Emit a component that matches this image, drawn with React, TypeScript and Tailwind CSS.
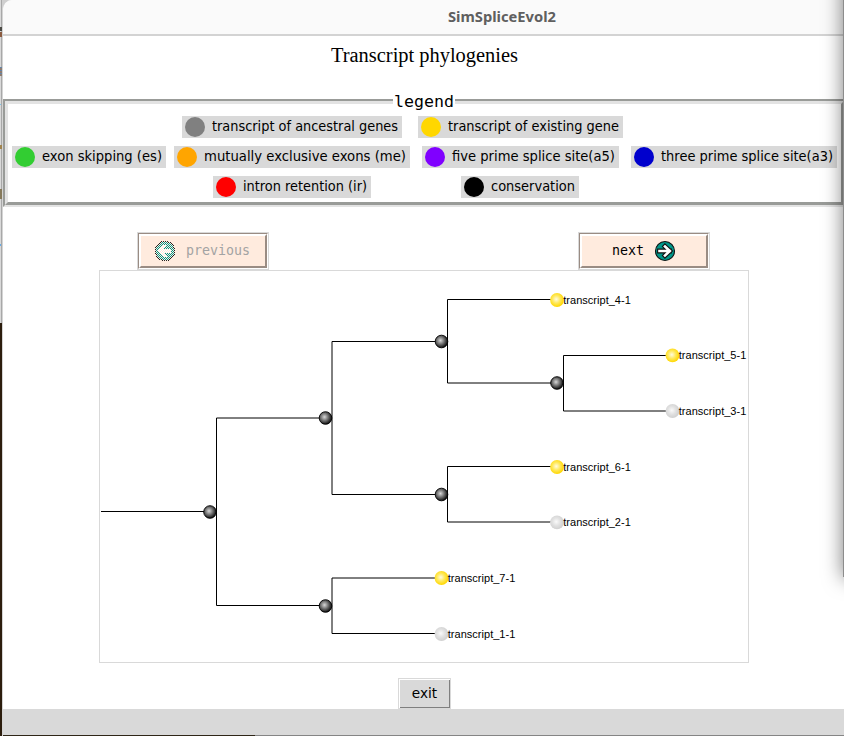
import { ReactNode } from "react";

type Item = { color: string; label: string; width: string; textWidth: number };

function LegendItem({ color, label, width, textWidth }: Item) {
  return (
    <div className={`flex h-[22px] items-center bg-[#d9d9d9] pl-[3px] ${width}`}>
      <span className={`size-5 shrink-0 rounded-full ${color}`} />
      <svg className="ml-[7px] h-[22px] shrink-0 overflow-visible" width={textWidth} height="22">
        <text
          x="0"
          y="15"
          textLength={textWidth}
          lengthAdjust="spacingAndGlyphs"
          className="fill-black font-['DejaVu_Sans',sans-serif] text-[13.6px]"
        >
          {label}
        </text>
      </svg>
    </div>
  );
}

function NextArrow() {
  const arrow = "M5.5 11H15.5M11 6.5L15.8 11L11 15.5";
  return (
    <svg width="22" height="22" viewBox="0 0 22 22" className="shrink-0">
      <circle cx="11" cy="11" r="9.5" fill="#009688" stroke="#111" strokeWidth="1.1" />
      <path d={arrow} fill="none" stroke="#111" strokeWidth="4.8" strokeLinecap="square" />
      <path d={arrow} fill="none" stroke="#fff" strokeWidth="2.6" strokeLinecap="square" />
    </svg>
  );
}

// The disabled icon keeps every other pixel of a left-pointing arrow in a disc.
const pixels = { teal: "", dark: "", white: "" };
for (let y = 0; y < 22; y++) {
  for (let x = 0; x < 22; x++) {
    if ((x + y) % 2) continue;
    const r = Math.hypot(x - 10.5, y - 10.5);
    if (r > 10.2) continue;
    const dy = Math.abs(y - 10.5);
    const inArrow = (dy < 2 && x > 5 && x < 17) || (dy < 6 && Math.abs(x - 5 - dy) < 2.2);
    const kind = r > 9 ? "dark" : inArrow ? "white" : "teal";
    pixels[kind] += `M${x} ${y}h1v1h-1z`;
  }
}

function PreviousArrow() {
  return (
    <svg width="22" height="22" viewBox="0 0 22 22" className="shrink-0" shapeRendering="crispEdges">
      <path d={pixels.teal} fill="#009688" />
      <path d={pixels.dark} fill="#222" />
      <path d={pixels.white} fill="#fff" />
    </svg>
  );
}

function NavButton({ inset, children }: { inset: string; children: ReactNode }) {
  return (
    <button className="h-[38px] w-[132px] border border-[#d9d9d9] bg-white">
      <span className="block h-full border-t border-r border-b border-l border-t-[#9a8c83] border-r-white border-b-white border-l-[#9a8c83]">
        <span
          className={`flex h-full items-center border-t-2 border-r-2 border-b-2 border-l-2 border-t-white border-r-[#9a8c83] border-b-[#9a8c83] border-l-white bg-[#ffebde] font-['DejaVu_Sans_Mono',monospace] text-[13.3px] ${inset}`}
        >
          {children}
        </span>
      </span>
    </button>
  );
}

const branches = [
  "M101 511.5H210", "M216.5 605.5V418H326", "M216.5 605.5H326",
  "M332 494.5V341.5H441", "M332 494.5H441", "M332 633.5V578H441", "M332 633.5H441",
  "M447.5 383V299.5H557", "M447.5 383H557", "M447.5 522V466.5H557", "M447.5 522H557",
  "M563.5 411V355.5H673", "M563.5 411H673",
];
const inner = [[210, 512], [325.5, 418], [325.5, 606], [441.5, 341.5], [441.5, 494.5], [557, 383]];
const leaves = [
  { x: 557, y: 300, n: "4", on: true },
  { x: 672.5, y: 355.4, n: "5", on: true },
  { x: 672.5, y: 411, n: "3", on: false },
  { x: 557, y: 467, n: "6", on: true },
  { x: 557, y: 522.4, n: "2", on: false },
  { x: 441.5, y: 578, n: "7", on: true },
  { x: 441.5, y: 634, n: "1", on: false },
];

function Tree() {
  return (
    <svg width="648" height="391" viewBox="100 271 648 391" className="block">
      <defs>
        <radialGradient id="black" cx=".42" cy=".42" r=".6">
          <stop offset="0" stopColor="#d8d8d8" />
          <stop offset=".5" stopColor="#707070" />
          <stop offset="1" stopColor="#080808" />
        </radialGradient>
        <radialGradient id="gold" cx=".45" cy=".45" r=".55">
          <stop offset="0" stopColor="#fffbe0" />
          <stop offset=".5" stopColor="#ffe95e" />
          <stop offset="1" stopColor="#ffd700" />
        </radialGradient>
        <radialGradient id="silver" cx=".45" cy=".45" r=".55">
          <stop offset="0" stopColor="#fafafa" />
          <stop offset=".5" stopColor="#e2e2e2" />
          <stop offset="1" stopColor="#d0d0d0" />
        </radialGradient>
      </defs>
      {branches.map((d) => (
        <path key={d} d={d} fill="none" stroke="#000" strokeWidth="1" />
      ))}
      {inner.map(([x, y]) => (
        <circle key={`${x}-${y}`} cx={x} cy={y} r="6.3" fill="url(#black)" stroke="#000" strokeWidth=".9" />
      ))}
      {leaves.map(({ x, y, n, on }) => (
        <g key={n}>
          <circle cx={x} cy={y} r="6.9" fill={on ? "url(#gold)" : "url(#silver)"} />
          <text
            x={x + 6.3}
            y={Math.round(y) + 4}
            textLength="67.5"
            className="fill-black font-['Liberation_Sans',Arial,sans-serif] text-[11px]"
          >
            {`transcript_${n}-1`}
          </text>
        </g>
      ))}
    </svg>
  );
}

export default function App() {
  return (
    <div className="relative flex h-[736px] w-[844px] overflow-hidden bg-[#cfcfcf]">
      <div className="flex w-[2px] shrink-0 flex-col">
        <div className="flex h-[323px] flex-col bg-[linear-gradient(to_right,#d9d9d9_50%,#a8a8a8_50%)]">
          <div className="mt-[27px] h-1 bg-[#4b4a45]" />
          <div className="mt-px h-[5px] bg-[#8b5b40]" />
          <div className="mt-[30px] h-[9px] bg-[repeating-linear-gradient(to_bottom,#6484a8_0_1px,#8d7c70_1px_3px)]" />
          <div className="mt-7 h-px w-px bg-[#7cc4ea]" />
          <div className="mt-10 h-1 bg-[#a08450]" />
          <div className="mt-10 h-[10px] bg-[#85795b]" />
          <div className="mt-[45px] h-[2px] w-px bg-[#68aee8]" />
        </div>
        <div className="flex-1 bg-[#2c1d0d]" />
      </div>
      <div className="flex min-w-0 flex-1 flex-col overflow-hidden rounded-tl-[10px] border-l border-[#d4d4d4] bg-white">
        <header className="h-9 shrink-0 border-b-2 border-[#d3d3d3] bg-[#fafafa]">
          <svg width="841" height="34">
            <text
              x="445"
              y="22"
              textLength="108"
              lengthAdjust="spacingAndGlyphs"
              className="fill-[#5f5f5f] font-['Noto_Sans','Open_Sans',sans-serif] text-[14px] font-bold"
            >
              SimSpliceEvol2
            </text>
          </svg>
        </header>
        <h1 className="h-[63px] shrink-0">
          <svg width="841" height="63">
            <text
              x="328"
              y="26"
              textLength="187"
              lengthAdjust="spacingAndGlyphs"
              className="fill-black font-['Liberation_Serif','Times_New_Roman',serif] text-[20px]"
            >
              Transcript phylogenies
            </text>
          </svg>
        </h1>
        <section className="relative h-[108px] w-[844px] shrink-0 border-t-2 border-r-[3px] border-b-2 border-l-2 border-t-[#999b98] border-r-[#e3e3e3] border-b-[#e3e3e3] border-l-[#999b98]">
          <div className="h-full border-t-[3px] border-r-[3px] border-b-[3px] border-l-[3px] border-t-[#e3e3e3] border-r-[#999b98] border-b-[#999b98] border-l-[#e3e3e3]">
            <div className="flex flex-col gap-2 pt-3">
              <div className="flex gap-4 pl-[174px]">
                <LegendItem color="bg-[#808080]" label="transcript of ancestral genes" width="w-[220px]" textWidth={186} />
                <LegendItem color="bg-[#ffd700]" label="transcript of existing gene" width="w-[205px]" textWidth={171} />
              </div>
              <div className="flex pl-1">
                <LegendItem color="bg-[#32cd32]" label="exon skipping (es)" width="w-[154px]" textWidth={120} />
                <div className="w-2" />
                <LegendItem color="bg-[#ffa500]" label="mutually exclusive exons (me)" width="w-[236px]" textWidth={202} />
                <div className="w-3" />
                <LegendItem color="bg-[#8000ff]" label="five prime splice site(a5)" width="w-[197px]" textWidth={163} />
                <div className="w-3" />
                <LegendItem color="bg-[#0000cd]" label="three prime splice site(a3)" width="w-[206px]" textWidth={172} />
              </div>
              <div className="flex gap-[90px] pl-[205px]">
                <LegendItem color="bg-[#ff0000]" label="intron retention (ir)" width="w-[158px]" textWidth={124} />
                <LegendItem color="bg-black" label="conservation" width="w-[118px]" textWidth={84} />
              </div>
            </div>
          </div>
          <span className="absolute -top-[9px] left-[388px] h-5 w-[62px] bg-white text-center font-['DejaVu_Sans_Mono',monospace] text-[16.6px] leading-5">
            legend
          </span>
        </section>
        <nav className="mt-[25px] flex h-[38px] shrink-0 gap-[309px] pl-[134px]">
          <NavButton inset="pl-[13px]">
            <PreviousArrow />
            <span className="ml-[10px] text-[#a3a3a3]">previous</span>
          </NavButton>
          <NavButton inset="pl-[30px]">
            <span className="w-8 text-black">next</span>
            <span className="w-[10px]" />
            <NextArrow />
          </NavButton>
        </nav>
        <main className="ml-[96px] h-[393px] w-[650px] shrink-0 border border-[#d9d9d9] bg-white">
          <Tree />
        </main>
        <div className="h-[46px] shrink-0 pt-[15px] pl-[395px]">
          <button className="block h-[31px] w-[53px] border border-[#d9d9d9] bg-white pt-px pl-px">
            <span className="flex h-full items-center justify-center border-r border-b border-[#7f7f7f] bg-[#d9d9d9] font-['DejaVu_Sans',sans-serif] text-[13.6px]">
              exit
            </span>
          </button>
        </div>
        <footer className="flex h-[27px] shrink-0 items-end bg-[#d9d9d9]">
          <div className="h-px w-[252px] bg-[#2f2618]" />
          <div className="h-px flex-1 bg-[#858585]" />
        </footer>
      </div>
      <div className="absolute -top-10 left-[843px] h-[617px] w-10 bg-[#8c8c8c] shadow-[0_1px_20px_rgba(0,0,0,0.52)]" />
    </div>
  );
}
